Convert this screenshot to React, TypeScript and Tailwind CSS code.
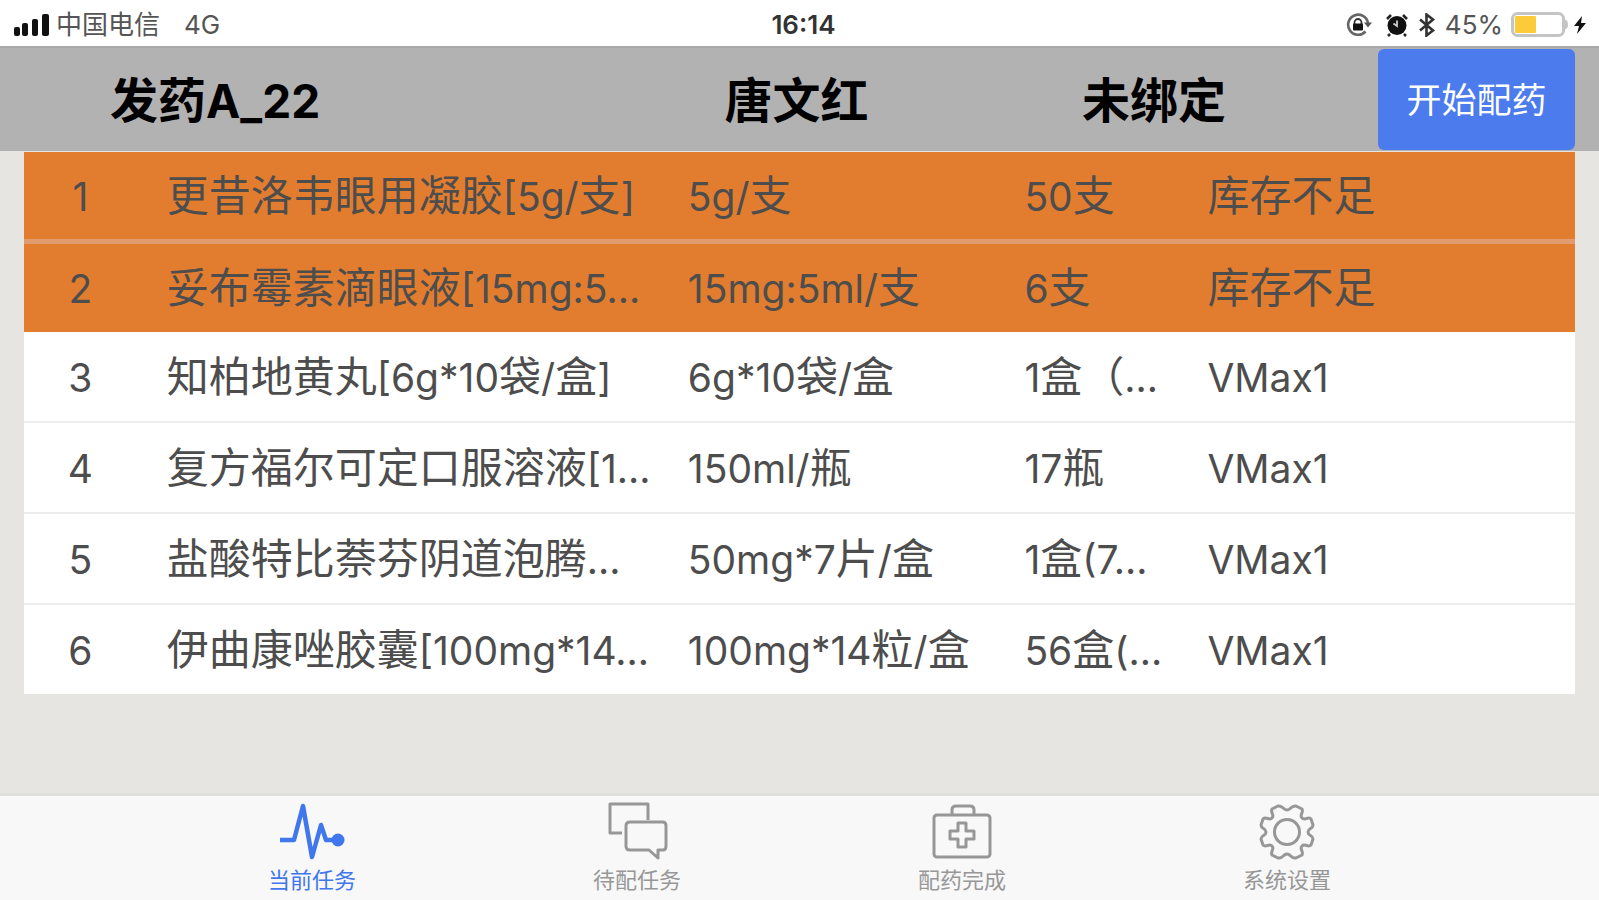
import type { ReactNode } from "react";

type Row = { name: string; spec: string; qty: string; place: string; short?: boolean };

const rows: Row[] = [
  { name: "更昔洛韦眼用凝胶[5g/支]", spec: "5g/支", qty: "50支", place: "库存不足", short: true },
  { name: "妥布霉素滴眼液[15mg:5...", spec: "15mg:5ml/支", qty: "6支", place: "库存不足", short: true },
  { name: "知柏地黄丸[6g*10袋/盒]", spec: "6g*10袋/盒", qty: "1盒（...", place: "VMax1" },
  { name: "复方福尔可定口服溶液[1...", spec: "150ml/瓶", qty: "17瓶", place: "VMax1" },
  { name: "盐酸特比萘芬阴道泡腾...", spec: "50mg*7片/盒", qty: "1盒(7...", place: "VMax1" },
  { name: "伊曲康唑胶囊[100mg*14...", spec: "100mg*14粒/盒", qty: "56盒(...", place: "VMax1" },
];

// Latin runs are set a little smaller than the Chinese characters beside them.
function Mixed({ text }: { text: string }) {
  return text.split(/([\x20-\x7e]+)/).map((part, i) =>
    i % 2 ? (
      <span key={i} className="text-[39px] leading-none">
        {part}
      </span>
    ) : (
      part
    ),
  );
}

function rowStyle(i: number) {
  if (i === 0) return { height: "h-[92px]", line: "border-b-5 border-[#e09c6c]" };
  if (i === 1) return { height: "h-[88px]", line: "" };
  if (i === rows.length - 1) return { height: "h-[89px]", line: "" };
  return { height: "h-[91px]", line: "border-b-2 border-[#ececec]" };
}

function StatusBar() {
  return (
    <div className="grid h-[46px] shrink-0 grid-cols-[1fr_auto_1fr] items-center bg-white px-3 pt-1 text-[26px] leading-none text-[#555]">
      <div className="flex items-center">
        <svg className="mr-1 h-6 w-10" viewBox="0 0 40 24" fill="#111" aria-hidden="true">
          <rect x="2" y="14" width="6" height="9" rx="2" />
          <rect x="10" y="10" width="6" height="13" rx="2" />
          <rect x="20" y="6" width="6" height="17" rx="2" />
          <rect x="30" y="1" width="7" height="22" rx="2" />
        </svg>
        <span>中国电信</span>
        <span className="ml-6">4G</span>
      </div>
      <span className="pl-2 font-semibold text-[#333]">16:14</span>
      <div className="flex items-center justify-end">
        <svg className="h-6 w-7" viewBox="0 0 28 24" aria-hidden="true">
          <path d="M20.5 18.5A10 10 0 1 1 23 10" fill="none" stroke="#666" strokeWidth="2.6" />
          <path d="M19 9.500h8l-4 5z" fill="#555" />
          <path d="M9.500 11.500V9.500a3.500 3.500 0 0 1 7 0v2" fill="none" stroke="#333" strokeWidth="1.800" />
          <rect x="8" y="10.500" width="10" height="7" rx="1" fill="#111" />
        </svg>
        <svg className="ml-3 h-6 w-6" viewBox="0 0 24 24" aria-hidden="true">
          <circle cx="12" cy="12.500" r="9.500" fill="#111" />
          <path d="M2 6l4-4M22 6l-4-4M5 21l-2 2M19 21l2 2" stroke="#222" strokeWidth="2.500" />
          <path d="M12 7.500V13l-3.500-2.500" fill="none" stroke="#ccc" strokeWidth="1.800" />
        </svg>
        <svg className="ml-2 h-6 w-5" viewBox="0 0 20 24" aria-hidden="true">
          <path d="M3 6.500l13 11-6.500 5v-21l6.500 5-13 11" fill="none" stroke="#333" strokeWidth="2.600" />
        </svg>
        <span className="ml-2">45%</span>
        <svg className="ml-2 h-7 w-[58px]" viewBox="0 0 58 28" aria-hidden="true">
          <rect x="1.500" y="2.500" width="51" height="22" rx="5" fill="#fff" stroke="#c4c4c4" strokeWidth="3" />
          <path d="M54 8.500c4 1 4 9 0 10z" fill="#c4c4c4" />
          <rect x="4" y="5" width="21" height="17" rx="1" fill="#fccb3a" />
        </svg>
        <svg className="ml-1 h-5 w-3.5" viewBox="0 0 14 20" aria-hidden="true">
          <path d="M9 1L1 11h5l-2 8 9-11H8z" fill="#111" />
        </svg>
      </div>
    </div>
  );
}

function Tab({ label, active, children }: { label: string; active?: boolean; children: ReactNode }) {
  return (
    <a
      href="#"
      aria-current={active ? "page" : undefined}
      className={`flex w-[325px] min-w-0 flex-col items-center gap-2 pt-1 text-[22px] leading-6 ${active ? "text-[#4177ec]" : "text-[#979797]"}`}
    >
      <svg className="h-[60px] w-[68px]" viewBox="0 0 68 60" fill="none" stroke="currentColor" aria-hidden="true">
        {children}
      </svg>
      {label}
    </a>
  );
}

export default function App() {
  return (
    <div className="flex min-h-screen flex-col bg-[#e6e5e1] font-['Inter','Noto_Sans_CJK_SC',sans-serif]">
      <StatusBar />
      <header className="flex h-[105px] shrink-0 items-center border-t-2 border-[#a9a9a9] bg-[#b2b2b2] pr-6 text-[48px] leading-none font-bold text-black">
        <h1 className="w-[46%] shrink-0 pt-0.5 pl-[110px]">
          发药<span className="text-[46px] leading-none">A_22</span>
        </h1>
        <span className="w-[22.7%] shrink-0 pt-0.5">唐文红</span>
        <span className="flex-1 pt-0.5">未绑定</span>
        <button type="button" className="h-[101px] w-[197px] rounded-md bg-[#4b7bed] pt-0.5 text-[35px] font-normal text-white">
          开始配药
        </button>
      </header>
      <main className="flex-1 px-6 pt-px pb-8">
        <table className="w-full table-fixed border-separate border-spacing-0 bg-white text-[42px] leading-none whitespace-nowrap text-[#4d4d4d]">
          <colgroup>
            <col className="w-[9.2%]" />
            <col className="w-[33.6%]" />
            <col className="w-[21.7%]" />
            <col className="w-[11.8%]" />
            <col />
          </colgroup>
          <tbody>
            {rows.map((r, i) => {
              const { height, line } = rowStyle(i);
              const cell = `p-0 text-left font-normal ${line}`;
              return (
                <tr key={r.name} className={`${height} ${r.short ? "bg-[#e27d2f]" : "bg-white"}`}>
                  <th scope="row" className={`p-0 pr-[30px] text-center font-normal ${line}`}>
                    <Mixed text={String(i + 1)} />
                  </th>
                  <td className={cell}><Mixed text={r.name} /></td>
                  <td className={cell}><Mixed text={r.spec} /></td>
                  <td className={cell}><Mixed text={r.qty} /></td>
                  <td className={cell}><Mixed text={r.place} /></td>
                </tr>
              );
            })}
          </tbody>
        </table>
      </main>
      <nav className="flex h-[107px] shrink-0 justify-center border-t-3 border-[#dededb] bg-[#f8f8f8]">
        <Tab label="当前任务" active>
          <path d="M2 40h14L25 6l9 51 9-32 5 15h13" strokeWidth="4.500" strokeLinejoin="round" />
          <circle cx="60" cy="40" r="6.500" fill="currentColor" stroke="none" />
        </Tab>
        <Tab label="待配任务">
          <path d="M19 33H7V4h38v16" strokeWidth="3" strokeLinejoin="round" />
          <path d="M27 22h33q3 0 3 4v20q0 4-3 4h-5v8l-9-8H27q-4 0-4-4V26q0-4 4-4z" strokeWidth="3" strokeLinejoin="round" />
        </Tab>
        <Tab label="配药完成">
          <rect x="6" y="15" width="56" height="42" rx="3" strokeWidth="3" />
          <path d="M24 15V10q0-4 4-4h14q4 0 4 4v5" strokeWidth="3" />
          <path d="M30 23h8v8h8v8h-8v8h-8v-8h-8v-8h8z" strokeWidth="3" strokeLinejoin="round" />
        </Tab>
        <Tab label="系统设置">
          <path
            d="M34 10C38 10 38 5 43 6L49 9C51 13 46 15 49 18S55 16 58 19L60 25C60 29 55 28 55 32S60 35 60 39L58 45C55 48 52 43 49 46S51 51 49 55L43 58C38 59 38 54 34 54S30 59 25 58L19 55C17 51 22 49 19 46S13 48 10 45L8 39C8 35 13 36 13 32S8 29 8 25L10 19C13 16 16 21 19 18S17 13 19 9L25 6C30 5 30 10 34 10Z"
            strokeWidth="3"
            strokeLinejoin="round"
          />
          <circle cx="34" cy="32" r="12.500" strokeWidth="3" />
        </Tab>
      </nav>
    </div>
  );
}
